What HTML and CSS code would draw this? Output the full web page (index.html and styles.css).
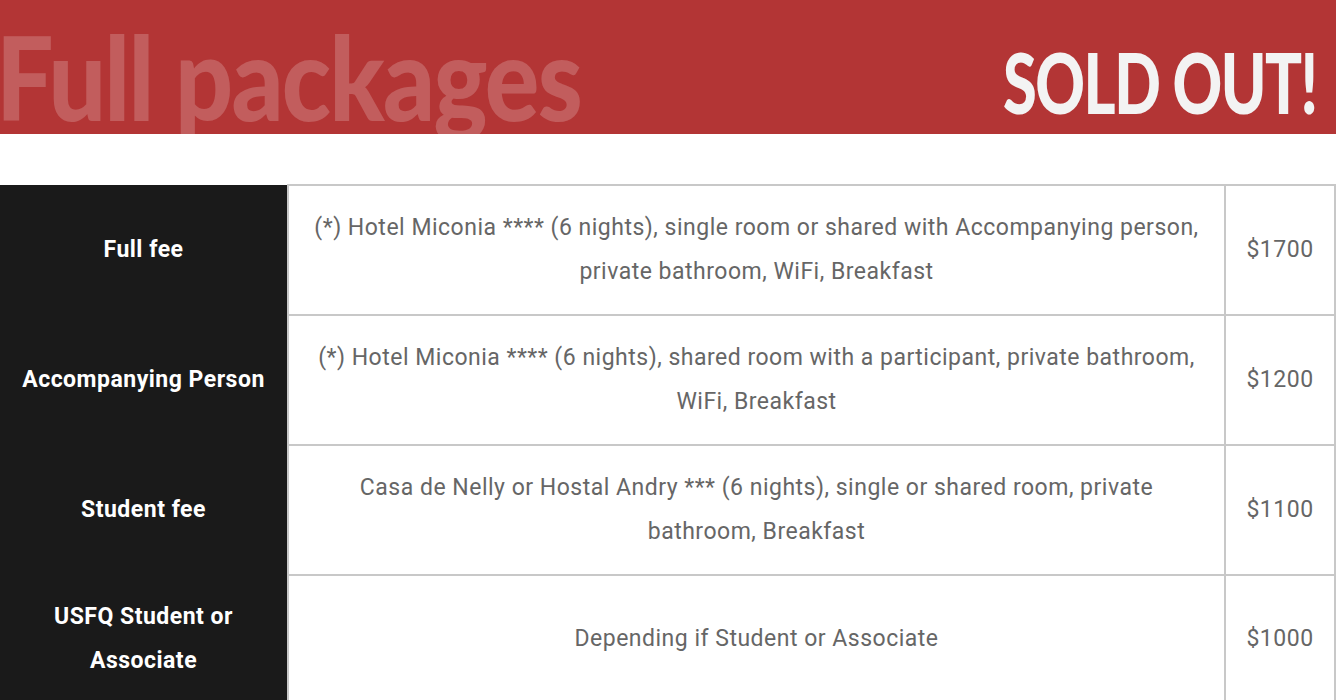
FILE: index.html
```html
<!DOCTYPE html>
<html lang="en">
<head>
<meta charset="utf-8">
<title>Full packages</title>
<link rel="stylesheet" href="styles.css">
</head>
<body>
<header class="banner">
  <h1 class="banner-title"><span class="squeeze">Full packages</span></h1>
  <div class="banner-sold"><span class="squeeze squeeze-right">SOLD OUT!</span></div>
</header>
<table class="packages">
  <tbody>
    <tr>
      <th>Full fee</th>
      <td class="desc">(*) Hotel Miconia **** (6 nights), single room or shared with Accompanying person, private bathroom, WiFi, Breakfast</td>
      <td class="price">$1700</td>
    </tr>
    <tr>
      <th>Accompanying Person</th>
      <td class="desc">(*) Hotel Miconia **** (6 nights), shared room with a participant, private bathroom, WiFi, Breakfast</td>
      <td class="price">$1200</td>
    </tr>
    <tr>
      <th>Student fee</th>
      <td class="desc">Casa de Nelly or Hostal Andry *** (6 nights), single or shared room, private bathroom, Breakfast</td>
      <td class="price">$1100</td>
    </tr>
    <tr>
      <th>USFQ Student or Associate</th>
      <td class="desc">Depending if Student or Associate</td>
      <td class="price">$1000</td>
    </tr>
  </tbody>
</table>
</body>
</html>
```
FILE: styles.css
```css
html, body {
  margin: 0;
  padding: 0;
  background: #ffffff;
}
body {
  font-family: Roboto, "Liberation Sans", Arial, sans-serif;
  overflow: hidden;
}
.banner {
  background: #b33535;
  height: 134px;
  display: flex;
  justify-content: space-between;
  align-items: flex-start;
  overflow: hidden;
  margin-bottom: 50px;
}
.banner-title {
  margin: 18px 0 0 -4px;
  font-family: Lato, Roboto, sans-serif;
  font-size: 117px;
  font-weight: 900;
  line-height: 1;
  color: rgba(255, 255, 255, 0.2);
  white-space: nowrap;
}
.banner-sold {
  margin: 40px 19px 0 0;
  font-family: Lato, Roboto, sans-serif;
  font-size: 84px;
  font-weight: 900;
  line-height: 1;
  color: #f3f3f3;
  white-space: nowrap;
}
.squeeze {
  display: inline-block;
  transform: scaleX(0.87);
  transform-origin: left top;
  letter-spacing: -2px;
}
.squeeze-right {
  transform: scaleX(0.73);
  transform-origin: right top;
}
.packages {
  width: 1336px;
  border-collapse: collapse;
  table-layout: fixed;
}
.packages th {
  width: 247px;
  background: #1a1a1a;
  color: #ffffff;
  font-weight: 700;
  font-size: 23px;
  letter-spacing: 0.5px;
  line-height: 44px;
  padding: 20px;
  text-align: center;
  vertical-align: middle;
  border: none;
}
.packages td {
  border: 2px solid #c8c8c8;
  color: #666666;
  font-size: 23px;
  letter-spacing: 0.5px;
  line-height: 44px;
  padding: 20px 25px;
  text-align: center;
  vertical-align: middle;
}
.packages td.price {
  width: 68px;
  padding: 20px;
}
```
